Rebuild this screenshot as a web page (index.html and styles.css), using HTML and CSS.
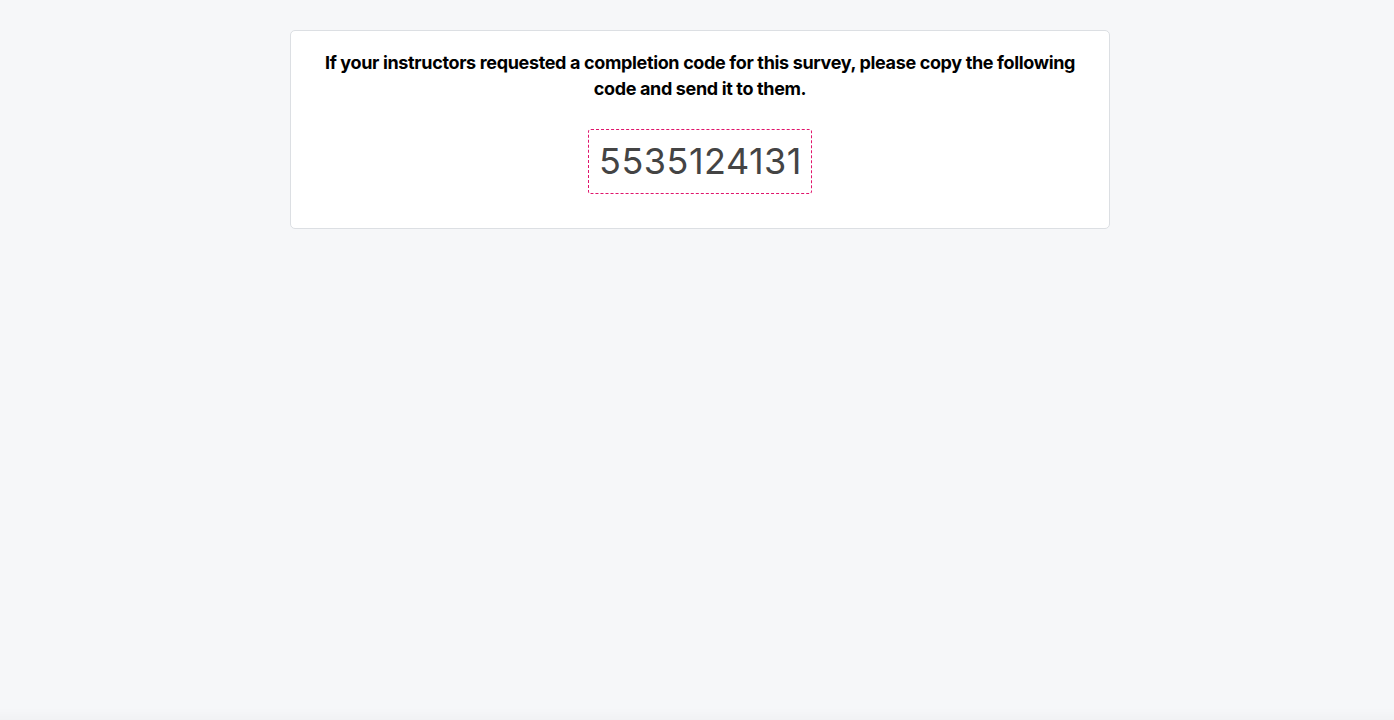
FILE: index.html
```html
<!DOCTYPE html>
<html lang="en">
<head>
<meta charset="utf-8">
<link rel="stylesheet" href="styles.css">
</head>
<body>
<main class="page">
  <section class="card">
    <h1 class="message">If your instructors requested a completion code for this survey, please copy the following code and send it to them.</h1>
    <div class="code-wrap">
      <div class="code">5535124131</div>
    </div>
  </section>
</main>
<div class="bottom-shade"></div>
</body>
</html>
```
FILE: styles.css
```css
html, body {
  margin: 0;
  padding: 0;
  height: 100%;
}
body {
  background: #f6f7f9;
  font-family: Inter, "Noto Sans", "Liberation Sans", sans-serif;
  color: #000;
}
.page {
  display: flex;
  justify-content: center;
  padding-top: 30px;
  padding-left: 6px;
}
.card {
  width: 820px;
  box-sizing: border-box;
  background: #fff;
  border: 1px solid #dcdfe3;
  border-radius: 5px;
  padding: 19px 20px 34px;
}
.message {
  margin: 0;
  font-size: 18px;
  line-height: 26px;
  font-weight: 700;
  text-align: center;
  letter-spacing: -0.35px;
}
.code-wrap {
  display: flex;
  justify-content: center;
  margin-top: 27px;
}
.code {
  border: 1px dashed #e0156b;
  border-radius: 3px;
  padding: 6px 9px 6px 10px;
  font-size: 36px;
  line-height: 51px;
  letter-spacing: 0.5px;
  color: #444;
}
.bottom-shade {
  position: fixed;
  left: 0;
  right: 0;
  bottom: 0;
  height: 12px;
  background: linear-gradient(to bottom, rgba(0,0,0,0), rgba(0,0,0,0.02));
  pointer-events: none;
}
```
